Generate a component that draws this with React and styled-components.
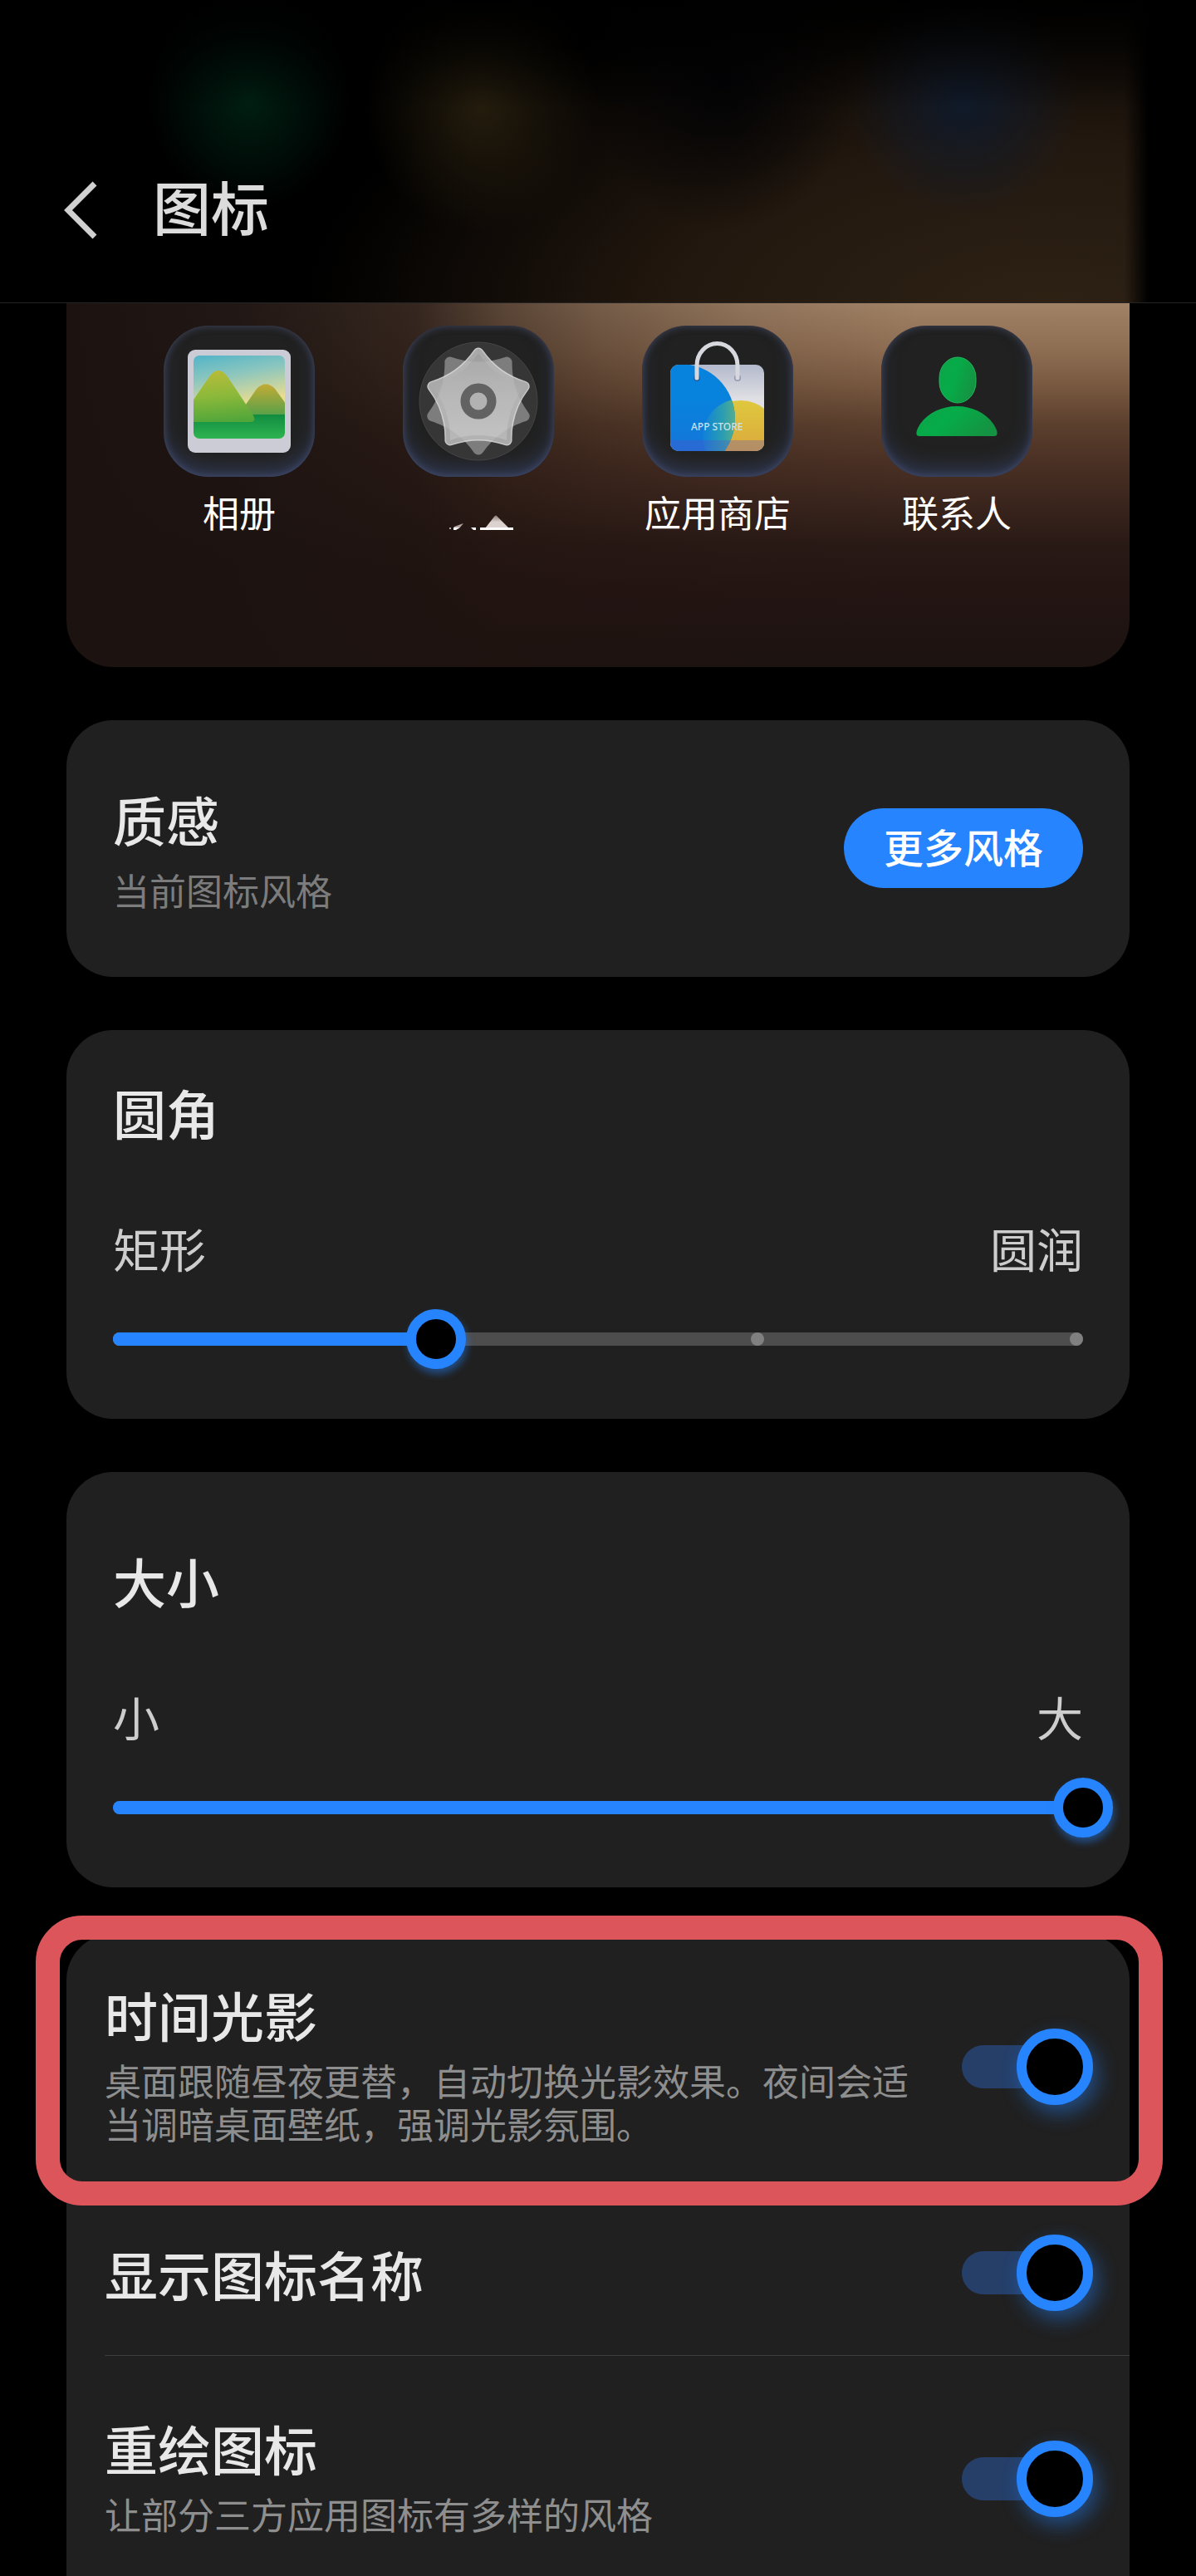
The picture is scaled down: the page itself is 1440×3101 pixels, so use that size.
import React, {useState} from 'react';
//Styling
import styled, {createGlobalStyle} from 'styled-components';

const apps = [
  {name: '相册', Icon: GalleryIcon},
  {name: '设置', Icon: SettingsIcon, fading: true},
  {name: '应用商店', Icon: StoreIcon},
  {name: '联系人', Icon: ContactsIcon},
];

const App = () => {
  const [corner, setCorner] = useState(1);
  const [size, setSize] = useState(100);
  const [toggles, setToggles] = useState({
    light: true,
    names: true,
    redraw: true,
  });

  const toggle = (key) => setToggles({...toggles, [key]: !toggles[key]});

  return (
    <Page>
      <GlobalStyle />
      <Header>
        <BackButton aria-label="返回">
          <svg width="48" height="72" viewBox="0 0 48 72" fill="none">
            <path d="M40 4 L8 36 L40 68" stroke="#d0d0d0" strokeWidth="7" />
          </svg>
        </BackButton>
        <h1>图标</h1>
      </Header>

      <Main>
        <Preview>
          {apps.map(({name, Icon, fading}) => (
            <AppItem key={name}>
              <Tile>
                <Icon />
              </Tile>
              {fading ? <FadingLabel /> : <AppName>{name}</AppName>}
            </AppItem>
          ))}
        </Preview>

        <StyleCard>
          <StyleText>
            <Title>质感</Title>
            <CurrentStyle>当前图标风格</CurrentStyle>
          </StyleText>
          <MoreButton>更多风格</MoreButton>
        </StyleCard>

        <SliderCard $top={54}>
          <Title id="corner">圆角</Title>
          <Ends>
            <span>矩形</span>
            <span>圆润</span>
          </Ends>
          <SliderBox>
            <Rail>
              <i />
              <i />
              <i />
              <i />
            </Rail>
            <Fill style={{width: `${(corner / 3) * 100}%`}} />
            <Range
              aria-labelledby="corner"
              min="0"
              max="3"
              value={corner}
              onChange={(e) => setCorner(Number(e.target.value))}
            />
          </SliderBox>
        </SliderCard>

        <SliderCard $top={86}>
          <Title id="size">大小</Title>
          <Ends>
            <span>小</span>
            <span>大</span>
          </Ends>
          <SliderBox>
            <Rail />
            <Fill style={{width: `${size}%`}} />
            <Range
              aria-labelledby="size"
              min="0"
              max="100"
              value={size}
              onChange={(e) => setSize(Number(e.target.value))}
            />
          </SliderBox>
        </SliderCard>

        <ToggleCard>
          <HighlightRow>
            <RowText>
              <Title as="span">时间光影</Title>
              <Desc>
                桌面跟随昼夜更替，自动切换光影效果。夜间会适当调暗桌面壁纸，强调光影氛围。
              </Desc>
            </RowText>
            <Switch checked={toggles.light} onChange={() => toggle('light')} />
          </HighlightRow>
          <Row>
            <Title as="span">显示图标名称</Title>
            <Switch checked={toggles.names} onChange={() => toggle('names')} />
          </Row>
          <Divider />
          <RedrawRow>
            <RowText>
              <Title as="span">重绘图标</Title>
              <Desc>让部分三方应用图标有多样的风格</Desc>
            </RowText>
            <Switch
              checked={toggles.redraw}
              onChange={() => toggle('redraw')}
            />
          </RedrawRow>
        </ToggleCard>
      </Main>
    </Page>
  );
};

//Icons
function GalleryIcon() {
  return (
    <svg viewBox="0 0 182 182">
      <defs>
        <linearGradient id="sky" x1="0" y1="0" x2="0.2" y2="1">
          <stop offset="0" stopColor="#52b4c8" />
          <stop offset="0.3" stopColor="#8cc6be" />
          <stop offset="0.65" stopColor="#e6dc92" />
        </linearGradient>
        <linearGradient id="hill" x1="0.3" y1="0" x2="0.4" y2="1">
          <stop offset="0" stopColor="#b9bb3a" />
          <stop offset="0.5" stopColor="#8cb93a" />
          <stop offset="1" stopColor="#52a63a" />
        </linearGradient>
        <linearGradient id="hill2" x1="0" y1="0" x2="0" y2="1">
          <stop offset="0" stopColor="#c3ab35" />
          <stop offset="1" stopColor="#4c9f4c" />
        </linearGradient>
        <linearGradient id="grass" x1="0" y1="0" x2="0" y2="1">
          <stop offset="0" stopColor="#118c40" />
          <stop offset="1" stopColor="#2fb552" />
        </linearGradient>
        <clipPath id="photo">
          <rect x="36" y="36" width="110" height="100" rx="7" />
        </clipPath>
      </defs>
      <rect x="29" y="29" width="124" height="124" rx="9" fill="#cbccd6" />
      <g clipPath="url(#photo)">
        <rect x="36" y="36" width="110" height="100" fill="url(#sky)" />
        <path
          d="M90 108 L112 76 Q123 65 134 76 L150 98 V112 H90 Z"
          fill="url(#hill2)"
        />
        <rect x="36" y="107" width="110" height="30" fill="url(#grass)" />
        <path
          d="M30 98 L56 60 Q66 48 76 60 L108 108 Q112 116 104 116 H30 Z"
          fill="url(#hill)"
        />
      </g>
    </svg>
  );
}

function SettingsIcon() {
  const star =
    'M0 -58 Q20.6 -28.3 55.2 -17.9 Q33.3 10.8 34.1 46.9 Q0 35 -34.1 46.9 Q-33.3 10.8 -55.2 -17.9 Q-20.6 -28.3 0 -58 Z';
  return (
    <svg viewBox="0 0 182 182">
      <defs>
        <linearGradient id="metal" x1="0" y1="0" x2="0" y2="1">
          <stop offset="0" stopColor="#b0b0b0" />
          <stop offset="0.5" stopColor="#c2c2c2" />
          <stop offset="1" stopColor="#cecece" />
        </linearGradient>
      </defs>
      <g transform="translate(91 91)" strokeLinejoin="round">
        <circle r="71" fill="#363636" stroke="#454545" />
        <path
          d={star}
          transform="rotate(180)"
          fill="#7d7d7d"
          stroke="#7d7d7d"
          strokeWidth="13"
        />
        <g opacity="0.86">
          <path d={star} fill="#dedede" stroke="#dedede" strokeWidth="13" />
          <path d={star} fill="#bcbcbc" stroke="#bcbcbc" strokeWidth="10" />
          <path d={star} fill="url(#metal)" />
        </g>
        <circle r="16" fill="#b2b2b2" stroke="#626262" strokeWidth="11" />
      </g>
    </svg>
  );
}

function StoreIcon() {
  return (
    <svg viewBox="0 0 182 182">
      <defs>
        <linearGradient id="paper" x1="0" y1="0" x2="0" y2="1">
          <stop offset="0" stopColor="#b3b9cc" />
          <stop offset="0.4" stopColor="#e0e0e4" />
        </linearGradient>
        <linearGradient id="blue" x1="0" y1="0" x2="0" y2="1">
          <stop offset="0.3" stopColor="#0783de" />
          <stop offset="1" stopColor="#1a70d8" />
        </linearGradient>
        <linearGradient id="yellow" x1="0" y1="0" x2="0" y2="1">
          <stop offset="0" stopColor="#dfc83e" />
          <stop offset="0.7" stopColor="#dba83c" />
        </linearGradient>
        <linearGradient id="mix" x1="0" y1="0" x2="0.45" y2="0">
          <stop offset="0" stopColor="#0f80da" />
          <stop offset="0.6" stopColor="#2b9fb0" />
          <stop offset="1" stopColor="#5fae86" />
        </linearGradient>
        <clipPath id="bag">
          <rect x="34" y="47" width="113" height="104" rx="10" />
        </clipPath>
        <clipPath id="disc">
          <circle cx="46" cy="112" r="66" />
        </clipPath>
      </defs>
      <g clipPath="url(#bag)">
        <rect x="34" y="47" width="113" height="104" fill="url(#paper)" />
        <circle cx="119" cy="134" r="44" fill="url(#yellow)" />
        <circle cx="46" cy="112" r="66" fill="url(#blue)" />
        <g clipPath="url(#disc)">
          <circle cx="119" cy="134" r="46" fill="url(#mix)" />
        </g>
        <rect
          x="34"
          y="138"
          width="113"
          height="13"
          fill="#5a50c8"
          opacity="0.3"
        />
      </g>
      <circle cx="66" cy="63" r="4" fill="#2460a0" />
      <circle cx="115" cy="63" r="4" fill="#8f97ae" />
      <path
        d="M66 63 V48 A24 26 0 0 1 115 48 V63"
        fill="none"
        stroke="#d6d8de"
        strokeWidth="5"
        strokeLinecap="round"
      />
      <BagText x="59" y="126">
        APP STORE
      </BagText>
    </svg>
  );
}

function ContactsIcon() {
  return (
    <svg viewBox="0 0 182 182">
      <defs>
        <linearGradient id="person" x1="0" y1="0" x2="1" y2="0.4">
          <stop offset="0" stopColor="#0ca54a" />
          <stop offset="0.5" stopColor="#06ab48" />
          <stop offset="1" stopColor="#149442" />
        </linearGradient>
      </defs>
      <rect
        x="70"
        y="38"
        width="44"
        height="55"
        rx="22"
        ry="25"
        fill="url(#person)"
        stroke="#21b75c"
      />
      <path
        d="M46 133 Q41 133 43 126 C50 108 70 97 91 97 C112 97 132 108 139 126 Q141 133 136 133 Z"
        fill="url(#person)"
      />
    </svg>
  );
}

// label in the middle of its fade, only the lower edge is left
function FadingLabel() {
  return (
    <FadingBox viewBox="0 0 84 52" role="img" aria-label="设置">
      <defs>
        <linearGradient id="fade" x1="0" y1="0" x2="0" y2="1">
          <stop offset="0" stopColor="#cfc3c0" stopOpacity="0.6" />
          <stop offset="0.5" stopColor="#dcd2d0" />
        </linearGradient>
      </defs>
      <path d="M50 46 L61 32 Q63 29 65 32 L79 46 Z" fill="url(#fade)" />
      <path d="M44 45 H84 V48 H44 Z" fill="#fff" />
      <path d="M13 44 L24 40 L19 46 L14 48 L12 46 Z" fill="#b5a6a2" />
      <path d="M12 45 H19 L15 48 H12 Z" fill="#fff" />
      <path d="M7 45 H9 V47 H7 Z" fill="#b5a6a2" />
      <path d="M33 45 H39 V48 H36 Z" fill="#fff" />
    </FadingBox>
  );
}

//Styles
const GlobalStyle = createGlobalStyle`
  *, *::before, *::after {
    box-sizing: border-box;
    margin: 0;
    padding: 0;
  }
  body {
    background: #000;
    color: #e8e8e8;
    font-family: 'Noto Sans CJK SC', sans-serif;
  }
  button, input {
    font-family: inherit;
  }
`;

const Page = styled.div`
  min-height: 100vh;
  background: #000;
`;

const Header = styled.header`
  display: flex;
  align-items: center;
  gap: 62px;
  height: 365px;
  padding: 142px 74px 0;
  border-bottom: 1px solid #242424;
  background: linear-gradient(90deg, transparent 94%, #000 96%),
    linear-gradient(rgba(0, 0, 0, 0.9), transparent 36%),
    radial-gradient(ellipse 120px 130px at 300px 120px, #001f13, transparent),
    radial-gradient(ellipse 140px 150px at 580px 130px, #241c0d, transparent),
    radial-gradient(ellipse 140px 140px at 1160px 125px, #101a2a, transparent),
    radial-gradient(ellipse 160px 180px at 870px 100px, #030305, transparent),
    radial-gradient(ellipse 900px 420px at 88% 105%, #2e2215, #23180f 50%, transparent);
  h1 {
    padding-bottom: 10px;
    font-size: 70px;
    line-height: 88px;
    font-weight: 500;
    color: #dcdcdc;
  }
`;

const BackButton = styled.button`
  display: flex;
  border: none;
  background: none;
  cursor: pointer;
`;

const Main = styled.main`
  display: flex;
  flex-direction: column;
  gap: 64px;
  padding: 0 80px;
`;

const Preview = styled.section`
  display: grid;
  grid-template-columns: repeat(4, 1fr);
  padding: 27px 64px 161px;
  border-radius: 0 0 56px 56px;
  background: linear-gradient(
      90deg,
      #1c1311 0%,
      rgba(28, 19, 17, 0.96) 16%,
      rgba(30, 19, 16, 0.82) 33%,
      rgba(32, 19, 15, 0.55) 41%,
      rgba(32, 19, 15, 0.34) 50%,
      rgba(32, 19, 15, 0.12) 64%,
      rgba(32, 19, 15, 0) 80%
    ),
    linear-gradient(
      #a08266 0%,
      #8f6f54 12%,
      #7a5a41 22%,
      #5c402e 33%,
      #4a3024 44%,
      #3a251d 55%,
      #2a1a16 66%,
      #241513 78%,
      #1c1311 100%
    );
`;

const AppItem = styled.div`
  display: flex;
  flex-direction: column;
  align-items: center;
  gap: 16px;
`;

const Tile = styled.div`
  width: 182px;
  height: 182px;
  border-radius: 54px;
  background: #212121;
  box-shadow: inset 0 -14px 26px -6px rgba(70, 90, 150, 0.5),
    inset 0 0 10px rgba(100, 110, 150, 0.5);
  svg {
    display: block;
  }
`;

const AppName = styled.span`
  font-size: 44px;
  line-height: 52px;
  color: #fff;
`;

const FadingBox = styled.svg`
  width: 84px;
  height: 52px;
`;

const BagText = styled.text`
  font-family: 'Noto Sans', sans-serif;
  font-size: 12px;
  font-weight: 500;
  fill: #c8e2ee;
`;

const Card = styled.section`
  border-radius: 56px;
  background: #202020;
`;

const Title = styled.h2`
  display: block;
  font-size: 64px;
  line-height: 88px;
  font-weight: 500;
  color: #e8e8e8;
`;

const StyleCard = styled(Card)`
  display: flex;
  align-items: center;
  justify-content: space-between;
  padding: 74px 56px 75px;
`;

const StyleText = styled.div`
  padding-bottom: 4px;
`;

const CurrentStyle = styled.p`
  margin-top: 16px;
  font-size: 44px;
  line-height: 52px;
  color: #7c7c7c;
`;

const MoreButton = styled.button`
  height: 96px;
  padding: 0 48px 6px;
  border: none;
  border-radius: 48px;
  background: #2684fe;
  color: #fff;
  font-size: 48px;
  font-weight: 500;
  cursor: pointer;
`;

const SliderCard = styled(Card)`
  padding: ${(props) => props.$top}px 56px 60px;
`;

const Ends = styled.div`
  display: flex;
  justify-content: space-between;
  margin: 88px 0 42px;
  font-size: 56px;
  line-height: 64px;
  color: #cdcdcd;
`;

const SliderBox = styled.div`
  display: grid;
  align-items: center;
  > * {
    grid-area: 1 / 1;
  }
`;

const Rail = styled.div`
  display: flex;
  justify-content: space-between;
  height: 16px;
  border-radius: 8px;
  background: #4d4d4d;
  i {
    width: 16px;
    height: 16px;
    border-radius: 50%;
    background: #808080;
  }
`;

const Fill = styled.div`
  height: 16px;
  border-radius: 8px;
  background: #2684fe;
`;

// wider than the rail by half a thumb on each side
const Range = styled.input.attrs({type: 'range'})`
  appearance: none;
  height: 72px;
  margin: 0 -36px;
  background: none;
  cursor: pointer;
  &::-webkit-slider-thumb {
    appearance: none;
    box-sizing: border-box;
    width: 72px;
    height: 72px;
    border: 12px solid #2684fe;
    border-radius: 50%;
    background: #000;
    box-shadow: 2px 6px 10px rgba(38, 132, 254, 0.45);
  }
`;

const ToggleCard = styled(Card)`
  margin-top: -8px;
  border-radius: 56px 56px 0 0;
`;

const Row = styled.label`
  display: flex;
  align-items: center;
  justify-content: space-between;
  gap: 48px;
  padding: 53px 44px 53px 46px;
  cursor: pointer;
`;

const HighlightRow = styled(Row)`
  position: relative;
  padding-top: 52px;
  padding-bottom: 41px;
  &::after {
    content: '';
    position: absolute;
    inset: -22px -40px -18px -37px;
    border: 29px solid #dc555b;
    border-radius: 56px;
    pointer-events: none;
  }
`;

const RedrawRow = styled(Row)`
  padding-top: 66px;
  padding-bottom: 35px;
`;

const RowText = styled.span`
  flex: 1;
  padding-bottom: 14px;
`;

const Desc = styled.span`
  display: block;
  margin-top: 10px;
  font-size: 44px;
  line-height: 52px;
  color: #8e8e8e;
`;

const Divider = styled.hr`
  margin-left: 46px;
  border: none;
  border-top: 1px solid #3c3c3c;
`;

const Switch = styled.input.attrs({type: 'checkbox'})`
  appearance: none;
  display: grid;
  align-items: center;
  flex-shrink: 0;
  width: 158px;
  height: 92px;
  cursor: pointer;
  &::before {
    content: '';
    grid-area: 1 / 1;
    width: 130px;
    height: 52px;
    border-radius: 26px;
    background: #444;
  }
  &::after {
    content: '';
    grid-area: 1 / 1;
    width: 92px;
    height: 92px;
    border: 12px solid #777;
    border-radius: 50%;
    background: #000;
  }
  &:checked::before {
    background: #253f69;
  }
  &:checked::after {
    justify-self: end;
    border-color: #2684fe;
    box-shadow: 6px 10px 24px rgba(38, 132, 254, 0.45);
  }
`;

export default App;
